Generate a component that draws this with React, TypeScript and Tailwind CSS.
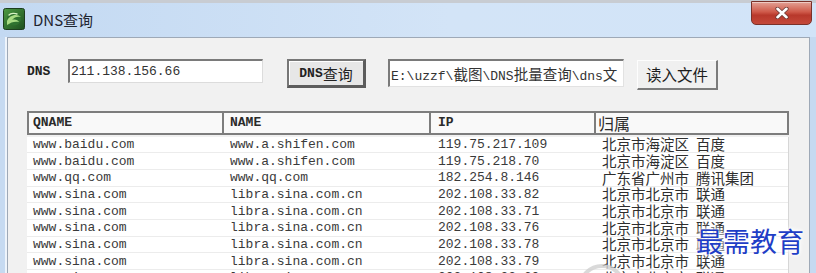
import React from 'react';

const mono = "font-['Liberation_Mono','Noto_Sans_CJK_SC',monospace]";
const cjk = "font-['Noto_Sans_CJK_SC','Noto_Sans',sans-serif]";

// latin runs stay in the mono face, han runs get their own size
const Mixed = ({ text, han }: { text: string; han: string }) => (
  <>
    {text.split(/([\u4e00-\u9fff]+)/).map((part, i) =>
      /[\u4e00-\u9fff]/.test(part) ? (
        <span key={i} className={han}>
          {part}
        </span>
      ) : (
        part
      )
    )}
  </>
);

const rows = [
  ['www.baidu.com', 'www.a.shifen.com', '119.75.217.109', '北京市海淀区', '百度'],
  ['www.baidu.com', 'www.a.shifen.com', '119.75.218.70', '北京市海淀区', '百度'],
  ['www.qq.com', 'www.qq.com', '182.254.8.146', '广东省广州市', '腾讯集团'],
  ['www.sina.com', 'libra.sina.com.cn', '202.108.33.82', '北京市北京市', '联通'],
  ['www.sina.com', 'libra.sina.com.cn', '202.108.33.71', '北京市北京市', '联通'],
  ['www.sina.com', 'libra.sina.com.cn', '202.108.33.76', '北京市北京市', '联通'],
  ['www.sina.com', 'libra.sina.com.cn', '202.108.33.78', '北京市北京市', '联通'],
  ['www.sina.com', 'libra.sina.com.cn', '202.108.33.79', '北京市北京市', '联通'],
  ['www.sina.com', 'libra.sina.com.cn', '202.108.33.60', '北京市北京市', '联通'],
];

const AppIcon = () => (
  <svg width="22" height="22" viewBox="0 0 22 22">
    <defs>
      <linearGradient id="appIconBg" x1="0" y1="0" x2="1" y2="1">
        <stop offset="0" stopColor="#4c9a42" />
        <stop offset="1" stopColor="#1c4f1f" />
      </linearGradient>
    </defs>
    <rect x="0.5" y="0.5" width="21" height="21" rx="2" fill="url(#appIconBg)" stroke="#1d3d1e" />
    <ellipse cx="11" cy="11" rx="7" ry="6.5" fill="#2f7330" />
    <path d="M4 13c2-6 10-8 14-4-3-1-7 0-9 3 3-1 6 0 7 2-4-1-8 0-12 3z" fill="#a8dc84" />
    <path d="M6 7c2-2 6-2 8-1" stroke="#d8f3c4" strokeWidth="1.4" fill="none" strokeLinecap="round" />
  </svg>
);

const CloseGlyph = () => (
  <svg width="14" height="12" viewBox="0 0 14 12">
    <path d="M2.5 1.8 11.5 10.2M11.5 1.8 2.5 10.2" stroke="#6b3a35" strokeWidth="4.2" strokeLinecap="round" />
    <path d="M2.5 1.8 11.5 10.2M11.5 1.8 2.5 10.2" stroke="#ffffff" strokeWidth="2.6" strokeLinecap="round" />
  </svg>
);

const App = () => {
  return (
    <div className="relative w-[816px] h-[273px] overflow-hidden flex flex-col bg-[#c6daf1]">
      {/* title bar */}
      <div className="h-[37px] shrink-0 flex items-start [background-image:linear-gradient(to_bottom,#c8ccd2_0px,#c8ccd2_3px,transparent_3px),linear-gradient(to_right,#c3d9f2,#d3e4f7_55%,#d2e4f8)]">
        <div className="ml-[3px] mt-[8px]">
          <AppIcon />
        </div>
        <span className={`ml-[8px] mt-[10px] text-[15px] leading-[20px] text-[#1e2530] ${cjk}`}>DNS查询</span>
        <div className="ml-auto mr-[4px] mt-[1px] w-[61px] h-[24px] rounded-b-[5px] border border-[#7a3129] flex items-center justify-center bg-[linear-gradient(to_bottom,#e3a195,#cf5a4a_45%,#b8382b_60%,#c4493a)] shadow-[inset_0_1px_0_rgba(255,255,255,0.45)]">
          <CloseGlyph />
        </div>
      </div>

      {/* client area */}
      <div className="flex-1 min-h-0 flex pl-[5px] pr-[6px]">
        <div className="w-[2px] bg-[#eef4fb]" />
        <div className="flex-1 border-l border-t border-r border-[#9ea9b7] bg-[#f1f1f1] pl-[19px] pt-[21px]">
          {/* query controls */}
          <div className="flex items-start h-[31px]">
            <span className={`w-[41px] pt-[5px] text-[13px] leading-[15px] font-bold text-[#222] ${mono}`}>DNS</span>
            <div className={`w-[195px] h-[24px] bg-white border-t-2 border-l-2 border-t-[#7a7a7a] border-l-[#7a7a7a] border-r border-b border-r-[#dcdcdc] border-b-[#dcdcdc] pl-[1px] pt-[1px] text-[13px] leading-[20px] text-[#333] ${mono}`}>
              211.138.156.66
            </div>
            <button className={`ml-[24px] w-[79px] h-[29px] bg-[#e7e7e7] border-2 border-[#777] border-r-[3px] border-b-[3px] border-r-[#5c5c5c] border-b-[#5c5c5c] shadow-[inset_1px_1px_0_#fff] flex items-center justify-center text-[13px] leading-none font-bold text-[#222] ${mono}`}>
              DNS<span className={`text-[15px] leading-none font-normal ${cjk}`}>查询</span>
            </button>
            <div className={`ml-[22px] w-[236px] h-[28px] overflow-hidden whitespace-nowrap bg-white border-t-2 border-l-2 border-t-[#7a7a7a] border-l-[#7a7a7a] border-r border-b border-r-[#e2e2e2] border-b-[#e2e2e2] pl-[1px] pt-[1px] text-[13px] leading-[23px] text-[#333] ${mono}`}>
              <Mixed text={'E:\\uzzf\\截图\\DNS批量查询\\dns文'} han={`text-[14.5px] ${cjk}`} />
            </div>
            <button className={`ml-[13px] mt-[1px] w-[81px] h-[30px] bg-[#f0f0f0] border-t border-l border-[#fdfdfd] border-r-2 border-b-2 border-r-[#7b7b7b] border-b-[#7b7b7b] flex items-center justify-center text-[15.5px] leading-none text-[#1d1d1d] ${cjk}`}>
              读入文件
            </button>
          </div>

          {/* result list */}
          <div className="mt-[21px] w-[762px]">
            <div className={`grid grid-cols-[195px_207px_165px_195px] h-[24px] bg-[#f9f9f9] border-t-2 border-b-2 border-[#7d7d7d] text-[13px] font-bold text-[#2a2a2a] ${mono}`}>
              <div className="border-l-2 border-[#7d7d7d] pl-[4px] flex items-center">QNAME</div>
              <div className="border-l-2 border-[#7d7d7d] pl-[6px] flex items-center">NAME</div>
              <div className="border-l-2 border-[#7d7d7d] pl-[7px] flex items-center">IP</div>
              <div className={`border-l-2 border-r-2 border-[#7d7d7d] pl-[2px] flex items-center text-[16px] leading-none font-normal ${cjk}`}>归属</div>
            </div>
            <div className="mt-[1.6px] bg-white border-r border-[#d6d6d6]">
              {rows.map((r, i) => (
                <div key={i} className="grid grid-cols-[195px_207px_165px_194px] h-[16.7px] items-center border-b border-[#ececec] text-[#3a3a3a]">
                  <span className={`pl-[6px] text-[13px] leading-none ${mono}`}>{r[0]}</span>
                  <span className={`pl-[8px] text-[13px] leading-none ${mono}`}>{r[1]}</span>
                  <span className={`pl-[9px] text-[13px] leading-none ${mono}`}>{r[2]}</span>
                  <span className={`pl-[8px] text-[14.5px] leading-none whitespace-nowrap text-[#2e2e2e] ${cjk}`}>
                    {r[3]}
                    <span className="ml-[7px]">{r[4]}</span>
                  </span>
                </div>
              ))}
            </div>
          </div>
        </div>
      </div>

      {/* faint ring mark near the bottom */}
      <svg className="absolute left-[572px] top-[258px]" width="60" height="15" viewBox="0 0 60 15">
        <circle cx="30" cy="30" r="22" fill="none" stroke="#cfcfcf" strokeWidth="4" opacity="0.8" />
      </svg>

      {/* watermark */}
      <div className={`absolute left-[696px] top-[226px] text-[27px] leading-[30px] text-[#1f3ec6] [text-shadow:0_0_3px_#fff,0_0_5px_#fff,0_0_6px_#fff] ${cjk}`}>
        最需教育
      </div>
    </div>
  );
};

export default App;
